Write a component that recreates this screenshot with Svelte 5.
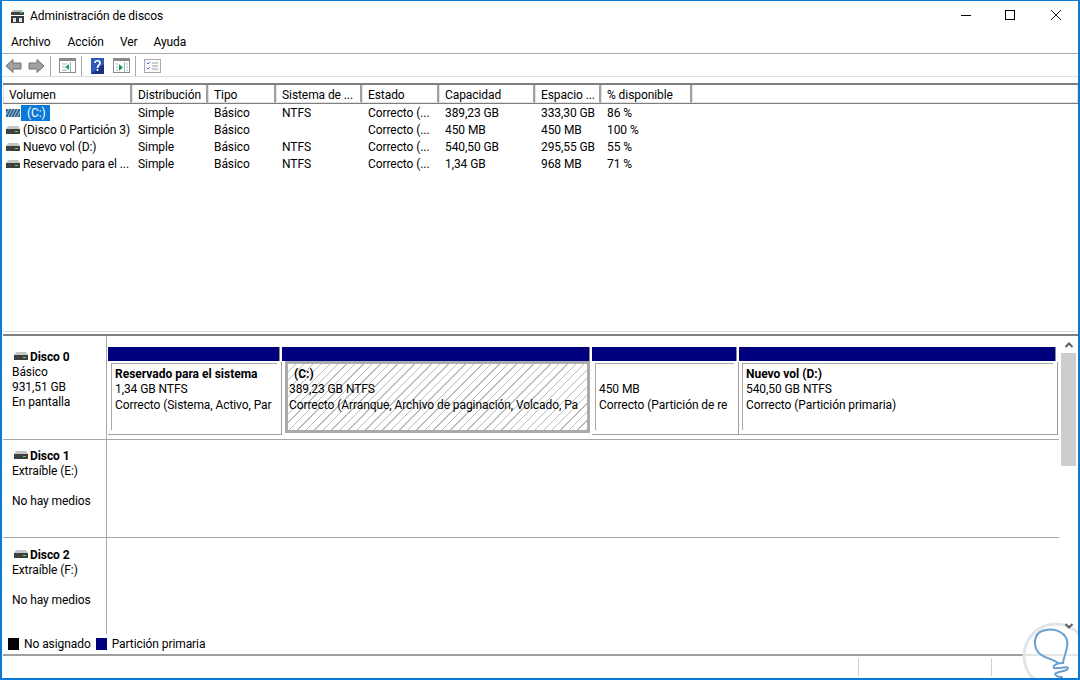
<script>
  const cols = [
    ['Volumen', 129], ['Distribución', 76], ['Tipo', 68], ['Sistema de ...', 86],
    ['Estado', 77], ['Capacidad', 96], ['Espacio ...', 66], ['% disponible', 91]
  ];
  const rows = [
    { icon: 'striped', v: '(C:)', sel: true, s: 'NTFS', c: '389,23 GB', e: '333,30 GB', p: '86 %' },
    { icon: 'disk', v: '(Disco 0 Partición 3)', s: '', c: '450 MB', e: '450 MB', p: '100 %' },
    { icon: 'disk', v: 'Nuevo vol (D:)', s: 'NTFS', c: '540,50 GB', e: '295,55 GB', p: '55 %' },
    { icon: 'disk', v: 'Reservado para el ...', s: 'NTFS', c: '1,34 GB', e: '968 MB', p: '71 %' }
  ];
  const parts = [
    { w: 174, name: 'Reservado para el sistema', size: '1,34 GB NTFS', st: 'Correcto (Sistema, Activo, Par' },
    { w: 310, name: '(C:)', size: '389,23 GB NTFS', st: 'Correcto (Arranque, Archivo de paginación, Volcado, Pa', sel: true },
    { w: 147, name: '', size: '450 MB', st: 'Correcto (Partición de re' },
    { w: 319, name: 'Nuevo vol  (D:)', size: '540,50 GB NTFS', st: 'Correcto (Partición primaria)' }
  ];
</script>

{#snippet diskIcon()}
  <svg class="dicon" width="14" height="8" viewBox="0 0 14 8">
    <path d="M2 0h10l2 3H0z" fill="#c4c4c4"/>
    <rect x="0" y="3" width="14" height="5" fill="#3f3f3f"/>
    <rect x="9" y="5" width="3" height="1" fill="#4ee04e"/>
  </svg>
{/snippet}

<div class="win">
  <header class="title">
    <svg width="15" height="15" viewBox="0 0 15 15">
      <path d="M3 1h9l2 5H1z" fill="#b9b9b9"/>
      <rect x="1" y="3" width="13" height="3" fill="#444"/>
      <rect x="10" y="3" width="3" height="1" fill="#35d04a"/>
      <rect x="1" y="7" width="13" height="7" fill="#3a3a3a"/>
      <rect x="3" y="9" width="3" height="4" fill="#e8e8e8"/>
      <rect x="9" y="9" width="3" height="4" fill="#e8e8e8"/>
    </svg>
    <span class="tname">Administración de discos</span>
    <div class="wbtns">
      <svg width="12" height="12" viewBox="0 0 12 12"><path d="M1 6.500h10" stroke="#000" fill="none"/></svg>
      <svg class="maxb" width="12" height="12" viewBox="0 0 12 12"><rect x="1.500" y="1.500" width="9" height="9" stroke="#000" fill="none"/></svg>
      <svg width="12" height="12" viewBox="0 0 12 12"><path d="M1 1l10 10M11 1L1 11" stroke="#222" fill="none"/></svg>
    </div>
  </header>

  <nav class="menu">
    <span>Archivo</span><span>Acción</span><span>Ver</span><span>Ayuda</span>
  </nav>

  <div class="tools">
    <svg class="ar" width="17" height="16" viewBox="0 0 17 16"><path d="M8 1.500 1 8l7 6.500V11h8V5H8z" fill="#a0a0a0" stroke="#707070"/></svg>
    <svg class="ar" width="17" height="16" viewBox="0 0 17 16"><path d="M9 1.500 16 8l-7 6.500V11H1V5h8z" fill="#a0a0a0" stroke="#707070"/></svg>
    <i class="sep"></i>
    <svg class="ic" width="17" height="15" viewBox="0 0 17 15">
      <rect x=".5" y=".5" width="16" height="14" fill="#fff" stroke="#8a8a8a"/><rect x="1" y="1" width="15" height="2" fill="#8a8a8a"/>
      <path d="M11.500 4v10M3 6h5M3 9h5M3 12h5" stroke="#9bb"/><path d="M10 6v6L6.500 9z" fill="#18a050"/>
    </svg>
    <i class="sep"></i>
    <svg class="help" width="13" height="16" viewBox="0 0 13 16">
      <rect width="13" height="16" fill="#2f58bd"/><path d="M0 16 13 6v10z" fill="#1b2e86"/>
      <path d="M4 5c0-3 5-3 5 0 0 2-2.500 2-2.500 5M6.500 11v2" stroke="#fff" stroke-width="1.700" fill="none"/>
    </svg>
    <svg class="ic2" width="17" height="15" viewBox="0 0 17 15">
      <rect x=".5" y=".5" width="16" height="14" fill="#fff" stroke="#8a8a8a"/><rect x="1" y="1" width="15" height="2" fill="#8a8a8a"/>
      <path d="M11.500 4v10M13 6h2M13 9h2M13 12h2M3 6h2M3 9h2M3 12h2" stroke="#9bb"/><path d="M6 6v7l4-3.500z" fill="#18a050"/>
    </svg>
    <i class="sep"></i>
    <svg class="ic3" width="17" height="14" viewBox="0 0 17 14">
      <rect x=".5" y=".5" width="16" height="13" fill="#fafafa" stroke="#a8a8a8"/>
      <path d="M8 4h6M8 7h6M8 10h6" stroke="#a0a0a0"/><path d="M3 4l1 1 2-2M3 9l1 1 2-2" stroke="#3a78d8" fill="none"/>
    </svg>
  </div>

  <section class="list">
    <div class="hrow">
      {#each cols as [label, w]}
        <div class="th" style="width:{w}px">{label}</div>
      {/each}
      <div class="th fill"></div>
    </div>
    {#each rows as r}
      <div class="tr">
        <div class="td vol" style="width:{cols[0][1]}px">
          {#if r.icon === 'striped'}
            <svg class="dicon" width="14" height="8" viewBox="0 0 14 8">
              <rect y="0" width="14" height="8" fill="#2f5f86"/>
              <path d="M0 6l3-6M2 8l4-8M5 8l4-8M8 8l4-8M11 8l3-6" stroke="#b7d2ea" stroke-width=".9"/>
            </svg>
          {:else}
            {@render diskIcon()}
          {/if}
          <span class:sel={r.sel}>{r.v}</span>
        </div>
        <div class="td" style="width:{cols[1][1]}px">Simple</div>
        <div class="td" style="width:{cols[2][1]}px">Básico</div>
        <div class="td" style="width:{cols[3][1]}px">{r.s}</div>
        <div class="td" style="width:{cols[4][1]}px">Correcto (...</div>
        <div class="td" style="width:{cols[5][1]}px">{r.c}</div>
        <div class="td" style="width:{cols[6][1]}px">{r.e}</div>
        <div class="td" style="width:{cols[7][1]}px">{r.p}</div>
      </div>
    {/each}
  </section>

  <div class="splitter"></div>

  <section class="lower">
    <div class="scrollwrap">
      <div class="disks">
        <div class="disk d0">
          <div class="dlabel">
            <div class="dn">{@render diskIcon()}<b>Disco 0</b></div>
            <div>Básico</div><div>931,51 GB</div><div>En pantalla</div>
          </div>
          <div class="parts">
            {#each parts as p}
              <div class="part" style="width:{p.w}px">
                <div class="bar"></div>
                <div class="body" class:hatch={p.sel}>
                  <div class="inner">
                    <div class="pname">{p.name}&nbsp;</div>
                    <div class="ln">{p.size}</div>
                    <div class="ln last">{p.st}</div>
                  </div>
                </div>
              </div>
            {/each}
          </div>
        </div>
        <div class="disk d1">
          <div class="dlabel">
            <div class="dn">{@render diskIcon()}<b>Disco 1</b></div>
            <div>Extraíble (E:)</div><div class="nm">No hay medios</div>
          </div>
        </div>
        <div class="disk d2">
          <div class="dlabel">
            <div class="dn">{@render diskIcon()}<b>Disco 2</b></div>
            <div>Extraíble (F:)</div><div class="nm">No hay medios</div>
          </div>
        </div>
      </div>
      <aside class="sb">
        <svg width="12" height="8" viewBox="0 0 12 8"><path d="M2.500 6 6 2.500 9.500 6" stroke="#606060" stroke-width="2" fill="none"/></svg>
        <div class="thumbtrack"><div class="thumb"></div></div>
        <svg width="12" height="8" viewBox="0 0 12 8"><path d="M2.500 2 6 5.500 9.500 2" stroke="#606060" stroke-width="2" fill="none"/></svg>
      </aside>
    </div>
    <div class="legend">
      <i class="sw black"></i><span>No asignado</span>
      <i class="sw navy"></i><span>Partición primaria</span>
    </div>
  </section>

  <footer class="status"><i></i><i></i></footer>

  <svg class="mark" width="66" height="66" viewBox="0 0 66 66">
    <circle cx="34" cy="34" r="32" fill="#fff" fill-opacity=".72" stroke="#dfe5e9" stroke-width="3"/>
    <path d="M36 41C30 36 20 36 16 30 11 23 12 12 20 9 30 5 42 9 45 18 47 26 42 32 41 41 36 41 30 43 32 46 36 47 46 44 46 46 46 50 34 49 33 52 34 55 38 55 40 55" fill="none" stroke="#669fd0" stroke-width="2" stroke-linecap="round"/>
  </svg>
</div>

<style>
  :global(body) { margin: 0; background: #fff; }
  .win {
    position: relative; width: 1080px; height: 680px; box-sizing: border-box; overflow: hidden;
    border: 2px solid #0a7ad6; border-top-width: 1px; background: #fff; color: #000;
    display: flex; flex-direction: column;
    font: 12px/15px Roboto, "Liberation Sans", sans-serif; letter-spacing: -0.08px;
  }
  .title { height: 30px; flex: none; display: flex; align-items: center; padding-left: 8px; }
  .tname { margin-left: 5px; }
  .wbtns { margin-left: auto; display: flex; gap: 33px; padding-right: 16px; margin-top: -2px; }
  .maxb { position: relative; left: -1px; }
  .menu {
    height: 23px; flex: none; display: flex; gap: 16px; padding: 4px 0 0 9px; box-sizing: border-box;
    border-bottom: 1px solid #ababab;
  }
  .menu span:first-child { margin-right: 1px; }
  .tools { height: 23px; flex: none; display: flex; align-items: center; padding: 1px 0 0 3px; border-bottom: 1px solid #dedede; box-sizing: border-box; }
  .ar + .ar { margin-left: 6px; }
  .sep { width: 1px; height: 20px; background: #a8a8a8; margin-left: 5px; }
  .ic { margin-left: 8px; }
  .help { margin-left: 9px; }
  .ic2 { margin-left: 9px; }
  .ic3 { margin-left: 8px; }

  .list {
    flex: none; height: 248px; margin: 6px 0 0 1px; box-sizing: border-box;
    border-top: 2px solid #7f7f7f; overflow: hidden;
  }
  .hrow { display: flex; height: 19px; border-bottom: 1px solid #7f7f7f; box-sizing: border-box; }
  .th {
    flex: none; box-sizing: border-box; padding: 3px 0 0 5px; height: 18px;
    border: 1px solid #e2e2e2; border-right: 2px solid #a0a0a0; border-top: 0;
    white-space: nowrap; overflow: hidden;
  }
  .th.fill { flex: 1; border-right: 1px solid #e2e2e2; }
  .tr { display: flex; height: 17px; }
  .td { flex: none; box-sizing: border-box; padding: 1px 0 0 6px; white-space: nowrap; overflow: hidden; line-height: 16px; }
  .td.vol { display: flex; align-items: center; padding-left: 3px; gap: 3px; }
  .sel { background: #0a78d7; color: #fff; padding: 0 4px 0 6px; margin-left: -2px; line-height: 17px; }
  .dicon { flex: none; }

  .splitter { flex: none; height: 5px; margin-left: 1px; background: #fff; border-top: 1px solid #dcdcdc; border-bottom: 2px solid #7f7f7f; box-sizing: border-box; }

  .lower { flex: 1; display: flex; flex-direction: column; min-height: 0; margin-left: 1px; }
  .scrollwrap { flex: 1; display: flex; min-height: 0; }
  .disks { width: 1056px; flex: none; }
  .disk { display: flex; box-sizing: border-box; border-bottom: 1px solid #a8a8a8; }
  .d0 { height: 104px; }
  .d1 { height: 98px; }
  .d2 { height: 96px; border-bottom: 0; }
  .dlabel {
    width: 104px; flex: none; box-sizing: border-box; padding: 9px 0 0 9px;
    border-right: 1px solid #a8a8a8;
  }
  .d0 .dlabel { padding-top: 14px; }
  .d2 .dlabel { padding-top: 10px; }
  .dn { display: flex; align-items: center; gap: 2px; padding-left: 2px; }
  .dn .dicon { margin-bottom: 3px; }
  .dn b { font-weight: 700; }
  .nm { margin-top: 15px; }
  .parts { display: flex; padding: 11px 0 0 1px; }
  .part { flex: none; box-sizing: border-box; display: flex; flex-direction: column; padding-right: 2px; }
  .bar { height: 14px; background: #00007f; flex: none; border-right: 1px solid #8c8c8c; }
  .body {
    height: 73px; flex: none; box-sizing: border-box; margin: 1px -2px 0 0;
    border-right: 1px solid #a0a0a0; border-bottom: 1px solid #a0a0a0; padding: 1px 4px 0 3px; background: #fff;
    overflow: hidden;
  }
  .inner {
    height: 67px; border-left: 1px solid #a8a8a8; border-top: 1px solid #a8a8a8; box-sizing: border-box;
    padding: 3px 3px 0 3px; white-space: nowrap; overflow: hidden;
  }
  .inner > div { overflow: hidden; }
  .ln.last { margin-top: 1px; }
  .pname { font-weight: 700; letter-spacing: 0; }
  .body.hatch {
    margin: 0 0 0 3px; width: calc(100% - 3px); height: 72px; border: 3px solid #ababab; padding: 0;
    background: repeating-linear-gradient(135deg, #fff 0 5px, #bcbcbc 5px 6px);
  }
  .hatch .inner { border: 0; padding: 3px 0 0 1px; height: 66px; }
  .hatch .pname { padding-left: 5px; }

  .sb { flex: 1; display: flex; flex-direction: column; align-items: center; padding: 5px 0 4px; box-sizing: border-box; width: 17px; position: relative; z-index: 1; }
  .thumbtrack { flex: 1; width: 15px; padding-top: 4px; }
  .thumb { height: 113px; background: #cdcdcd; }

  .legend { height: 20px; flex: none; display: flex; align-items: center; padding-left: 5px; box-sizing: border-box; }
  .sw { width: 11px; height: 12px; margin-right: 5px; }
  .sw.black { background: #000; }
  .sw.navy { background: #00007f; margin-left: 5px; }
  .status {
    height: 24px; flex: none; margin-left: 1px; border-top: 2px solid #a0a0a0; box-sizing: border-box;
    display: flex; justify-content: flex-end; padding: 2px 86px 2px 0; gap: 132px;
  }
  .status i { width: 1px; background: #cfcfcf; }
  .mark { position: absolute; left: 1020px; top: 621px; }
</style>
